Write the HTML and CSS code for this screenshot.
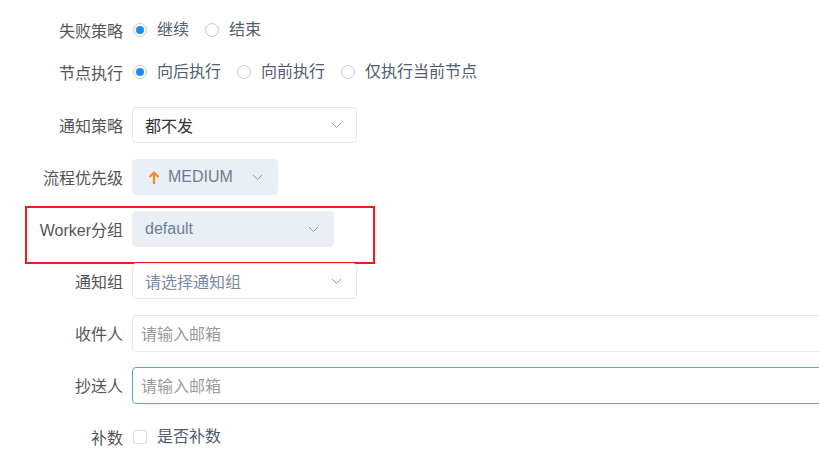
FILE: index.html
```html
<!DOCTYPE html>
<html lang="zh">
<head>
<meta charset="utf-8">
<title>表单</title>
<link rel="stylesheet" href="styles.css">
</head>
<body>
<div class="form">
  <div class="row row-radio">
    <div class="label">失败策略</div>
    <div class="control">
      <label class="radio checked"><span class="dot"></span><span class="rtext">继续</span></label>
      <label class="radio"><span class="dot"></span><span class="rtext">结束</span></label>
    </div>
  </div>
  <div class="row row-radio row-radio-last">
    <div class="label">节点执行</div>
    <div class="control">
      <label class="radio checked"><span class="dot"></span><span class="rtext">向后执行</span></label>
      <label class="radio"><span class="dot"></span><span class="rtext">向前执行</span></label>
      <label class="radio"><span class="dot"></span><span class="rtext">仅执行当前节点</span></label>
    </div>
  </div>
  <div class="row">
    <div class="label">通知策略</div>
    <div class="select w225"><span class="value">都不发</span><svg class="chev" width="11" height="7" viewBox="0 0 11 7"><path d="M1 1 L5.5 5.5 L10 1" fill="none" stroke="#8e9aae" stroke-width="1"/></svg></div>
  </div>
  <div class="row">
    <div class="label">流程优先级</div>
    <div class="select filled w146"><span class="value muted"><svg class="arrow" width="12" height="15" viewBox="0 0 12 15"><path d="M6 14 V2.5 M1.5 7 L6 2.5 L10.5 7" fill="none" stroke="#f08a24" stroke-width="2.2"/></svg>MEDIUM</span><svg class="chev" width="11" height="7" viewBox="0 0 11 7"><path d="M1 1 L5.5 5.5 L10 1" fill="none" stroke="#8e9aae" stroke-width="1"/></svg></div>
  </div>
  <div class="row marked">
    <div class="label">Worker分组</div>
    <div class="select filled w202"><span class="value muted">default</span><svg class="chev" width="11" height="7" viewBox="0 0 11 7"><path d="M1 1 L5.5 5.5 L10 1" fill="none" stroke="#8e9aae" stroke-width="1"/></svg></div>
    <div class="mark"></div>
  </div>
  <div class="row">
    <div class="label">通知组</div>
    <div class="select w225"><span class="value ph">请选择通知组</span><svg class="chev" width="11" height="7" viewBox="0 0 11 7"><path d="M1 1 L5.5 5.5 L10 1" fill="none" stroke="#8e9aae" stroke-width="1"/></svg></div>
  </div>
  <div class="row">
    <div class="label">收件人</div>
    <div class="input"><span class="iph">请输入邮箱</span></div>
  </div>
  <div class="row">
    <div class="label">抄送人</div>
    <div class="input focus"><span class="iph">请输入邮箱</span></div>
  </div>
  <div class="row">
    <div class="label">补数</div>
    <div class="control">
      <label class="check"><span class="box"></span><span class="rtext">是否补数</span></label>
    </div>
  </div>
</div>
</body>
</html>
```
FILE: styles.css
```css
html, body {
  margin: 0;
  padding: 0;
  background: #fff;
  overflow: hidden;
}
body {
  font-family: "Liberation Sans", "Noto Sans CJK SC", sans-serif;
  font-size: 16px;
  color: #333;
}
.form {
  padding-top: 17px;
}
.row {
  display: flex;
  align-items: center;
  height: 36px;
  margin-bottom: 16px;
  position: relative;
}
.row-radio {
  height: 26px;
}
.row-radio-last {
  margin-bottom: 22px;
}
.label {
  width: 123px;
  padding-right: 9px;
  text-align: right;
  color: #555;
  white-space: nowrap;
  flex: none;
}
.control {
  display: flex;
  align-items: center;
}
.radio, .check {
  display: flex;
  align-items: center;
  margin-right: 15px;
}
.dot {
  width: 14px;
  height: 14px;
  box-sizing: border-box;
  border: 1px solid #c5c8ce;
  border-radius: 50%;
  margin-left: 1px;
  margin-right: 10px;
  position: relative;
  background: #fff;
}
.checked .dot::after {
  content: "";
  position: absolute;
  left: 2px;
  top: 2px;
  width: 8px;
  height: 8px;
  border-radius: 50%;
  background: #1c8de8;
}
.rtext {
  color: #4f5d70;
  line-height: 20px;
}
.box {
  width: 14px;
  height: 14px;
  box-sizing: border-box;
  border: 1px solid #dcdfe6;
  border-radius: 2px;
  margin-left: 1px;
  margin-right: 10px;
}
.select {
  height: 36px;
  box-sizing: border-box;
  border: 1px solid #e3e8ef;
  border-radius: 4px;
  display: flex;
  align-items: center;
  justify-content: space-between;
  padding: 0 14px 0 12px;
  background: #fff;
  flex: none;
}
.select.filled {
  background: #e9eff5;
  border-color: #e9eff5;
}
.w225 { width: 225px; }
.w146 { width: 146px; }
.w202 { width: 202px; }
.value {
  display: flex;
  align-items: center;
  color: #333;
}
.value.muted {
  color: #6e7f95;
}
.value.ph {
  color: #7a8aa0;
}
.arrow {
  margin: 0 8px 0 3px;
}
.input {
  width: 720px;
  height: 37px;
  box-sizing: border-box;
  border: 1px solid #e3e8ef;
  border-radius: 4px;
  display: flex;
  align-items: center;
  padding-left: 8px;
  flex: none;
}
.input.focus {
  border-color: #5aa2e6;
}
.iph {
  color: #9a9a9a;
}
.mark {
  position: absolute;
  left: 25px;
  top: -5px;
  width: 350px;
  height: 58px;
  box-sizing: border-box;
  border: 2px solid #f01a1a;
}
```
